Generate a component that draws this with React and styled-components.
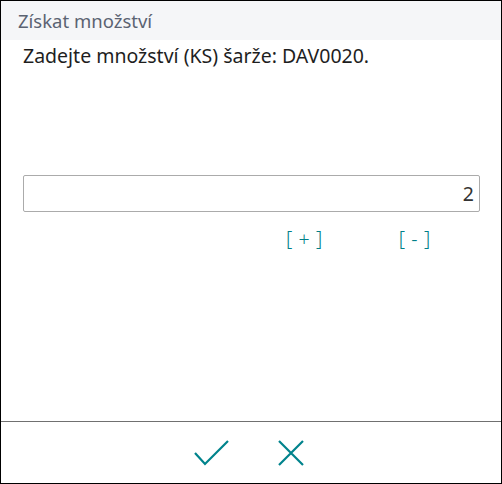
import React, { useState } from 'react';
import styled, { createGlobalStyle } from 'styled-components';

const GlobalStyle = createGlobalStyle`
  html, body {
    margin: 0;
    padding: 0;
    background: #ffffff;
  }
  * {
    box-sizing: border-box;
  }
`;

const Dialog = styled.div`
  width: 502px;
  height: 484px;
  border: 1px solid #000;
  display: flex;
  flex-direction: column;
  font-family: 'Noto Sans', 'Open Sans', sans-serif;
  background: #fff;
`;

const Header = styled.div`
  height: 39px;
  background: #f5f6f8;
  color: #5b6372;
  font-size: 18.5px;
  padding: 9px 0 0 17px;
  line-height: 22px;
`;

const Body = styled.div`
  flex: 1;
  display: flex;
  flex-direction: column;
  padding: 3px 21px 0 22px;
`;

const Prompt = styled.div`
  font-size: 19.5px;
  color: #1e1e1e;
  line-height: 26px;
`;

const Field = styled.input`
  margin-top: 106px;
  width: 457px;
  height: 37px;
  border: 1px solid #ababab;
  border-radius: 2px;
  text-align: right;
  font-family: inherit;
  font-size: 19.5px;
  color: #333;
  padding: 0 5px 0 8px;
  outline: none;
`;

const StepRow = styled.div`
  display: flex;
  margin-top: 15px;
  padding-left: 263px;
  gap: 76px;
`;

const Step = styled.button`
  border: none;
  background: none;
  padding: 0;
  font-family: inherit;
  font-size: 19.5px;
  font-weight: 300;
  letter-spacing: 0.6px;
  line-height: 24px;
  color: #007f88;
  cursor: pointer;
  white-space: pre;
`;

const Footer = styled.div`
  height: 62px;
  border-top: 1px solid #707070;
  display: flex;
  justify-content: center;
  align-items: center;
  gap: 49px;
  padding-top: 1px;
  padding-right: 5px;
`;

const IconButton = styled.button`
  border: none;
  background: none;
  padding: 0;
  display: flex;
  cursor: pointer;
`;

export default function App() {
  const [qty, setQty] = useState(2);

  return (
    <>
      <GlobalStyle />
      <Dialog>
        <Header>Získat množství</Header>
        <Body>
          <Prompt>Zadejte množství (KS) šarže: DAV0020.</Prompt>
          <Field
            value={qty}
            onChange={e => setQty(e.target.value)}
          />
          <StepRow>
            <Step onClick={() => setQty(Number(qty) + 1)}>[ + ]</Step>
            <Step onClick={() => setQty(Number(qty) - 1)}>[ - ]</Step>
          </StepRow>
        </Body>
        <Footer>
          <IconButton aria-label="OK">
            <svg width="35" height="26" viewBox="0 0 35 26">
              <path d="M1 13 L11 24 L34 1" fill="none" stroke="#00838c" strokeWidth="2.2" />
            </svg>
          </IconButton>
          <IconButton aria-label="Zrušit">
            <svg width="26" height="26" viewBox="0 0 26 26">
              <path d="M1 1 L25 25 M25 1 L1 25" fill="none" stroke="#00838c" strokeWidth="2.2" />
            </svg>
          </IconButton>
        </Footer>
      </Dialog>
    </>
  );
}
